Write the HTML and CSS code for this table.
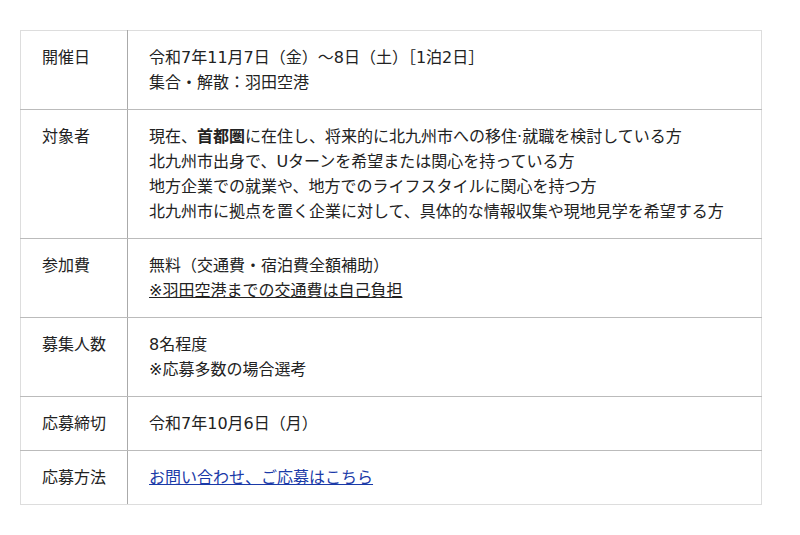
FILE: index.html
```html
<!DOCTYPE html>
<html lang="ja">
<head>
  <meta charset="UTF-8" />
  <meta name="viewport" content="width=device-width, initial-scale=1" />
  <title>募集要項</title>
  <link rel="stylesheet" href="styles.css">
</head>
<body>
  <table class="outline">
    <tr>
      <th>開催日</th>
      <td>令和7年11月7日（金）〜8日（土）［1泊2日］<br>集合・解散：羽田空港</td>
    </tr>
    <tr>
      <th>対象者</th>
      <td>
        現在、<strong>首都圏</strong>に在住し、将来的に北九州市への移住·就職を検討している方<br>
        北九州市出身で、Uターンを希望または関心を持っている方<br>
        地方企業での就業や、地方でのライフスタイルに関心を持つ方<br>
        北九州市に拠点を置く企業に対して、具体的な情報収集や現地見学を希望する方
      </td>
    </tr>
    <tr>
      <th>参加費</th>
      <td>無料（交通費・宿泊費全額補助）<br><span class="note">※羽田空港までの交通費は自己負担</span></td>
    </tr>
    <tr>
      <th>募集人数</th>
      <td>8名程度<br>※応募多数の場合選考</td>
    </tr>
    <tr>
      <th>応募締切</th>
      <td>令和7年10月6日（月）</td>
    </tr>
    <tr>
      <th>応募方法</th>
      <td><a href="#entry">お問い合わせ、ご応募はこちら</a></td>
    </tr>
  </table>
</body>
</html>
```

FILE: styles.css
```css
body {
  margin: 0;
  padding: 30px 20px;
  font-family: 'DejaVu Sans', 'Noto Sans CJK JP', sans-serif;
  font-size: 16px;
  line-height: 25px;
  color: #222;
  background: #fff;
}
.outline {
  width: 742px;
  border-collapse: collapse;
  border: 1px solid #ddd;
}
.outline th,
.outline td {
  padding: 14px 21px;
  text-align: left;
  vertical-align: top;
  border-bottom: 1px solid #bbb;
}
.outline tr:last-child th,
.outline tr:last-child td {
  border-bottom: 1px solid #ddd;
}
.outline th {
  width: 64px;
  font-weight: 400;
  border-right: 1px solid #aaa;
  white-space: nowrap;
}
.outline strong {
  font-weight: 700;
}
.note {
  text-decoration: underline;
}
.outline a {
  color: #1a3aa8;
  text-decoration: underline;
}
```
